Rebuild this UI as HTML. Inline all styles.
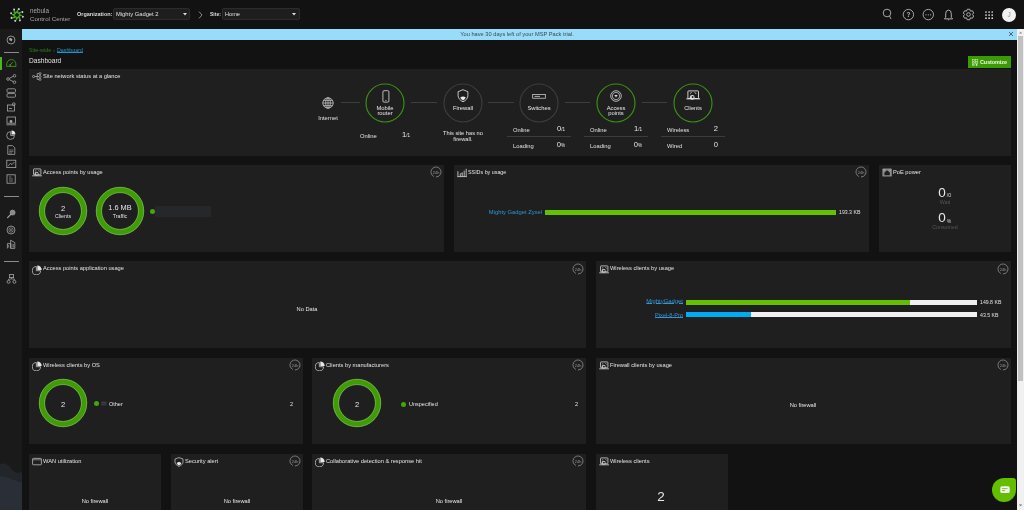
<!DOCTYPE html>
<html><head><meta charset="utf-8"><style>
html,body{margin:0;padding:0;width:1024px;height:510px;overflow:hidden;background:#121212;font-family:"Liberation Sans", sans-serif;}
.r{position:absolute;display:block;}
svg.r{will-change:transform;}
.tx{position:absolute;white-space:nowrap;will-change:transform;}
</style></head><body>
<div class="r" style="left:0.00px;top:0.00px;width:1024.00px;height:29.00px;background:#121212;"></div>
<svg class="r" style="left:8.65px;top:6.65px;width:16px;height:16px" viewBox="0 0 16 16"><circle cx="13.84" cy="9.76" r="1.05" fill="#c8c8c8"/><circle cx="10.89" cy="13.37" r="1.05" fill="#c8c8c8"/><circle cx="6.24" cy="13.84" r="1.05" fill="#c8c8c8"/><circle cx="2.63" cy="10.89" r="1.05" fill="#c8c8c8"/><circle cx="2.16" cy="6.24" r="1.05" fill="#c8c8c8"/><circle cx="5.11" cy="2.63" r="1.05" fill="#c8c8c8"/><circle cx="9.76" cy="2.16" r="1.05" fill="#c8c8c8"/><circle cx="13.37" cy="5.11" r="1.05" fill="#c8c8c8"/><path d="M7.42 6.40Q5.97 5.03 8.84 2.46Q9.78 5.10 8.82 6.51Z" fill="#45a818"/><path d="M8.72 6.46Q8.66 4.46 12.51 4.68Q11.31 7.21 9.63 7.52Z" fill="#45a818"/><path d="M9.60 7.42Q10.97 5.97 13.54 8.84Q10.90 9.78 9.49 8.82Z" fill="#45a818"/><path d="M9.54 8.72Q11.54 8.66 11.32 12.51Q8.79 11.31 8.48 9.63Z" fill="#45a818"/><path d="M8.58 9.60Q10.03 10.97 7.16 13.54Q6.22 10.90 7.18 9.49Z" fill="#45a818"/><path d="M7.28 9.54Q7.34 11.54 3.49 11.32Q4.69 8.79 6.37 8.48Z" fill="#45a818"/><path d="M6.40 8.58Q5.03 10.03 2.46 7.16Q5.10 6.22 6.51 7.18Z" fill="#45a818"/><path d="M6.46 7.28Q4.46 7.34 4.68 3.49Q7.21 4.69 7.52 6.37Z" fill="#45a818"/><circle cx="8.0" cy="8.0" r="1.6" fill="#101010"/></svg>
<div class="tx" style="left:30.00px;top:7.22px;font-size:6.3px;line-height:7.56px;color:#a6a6a6;font-weight:normal;">nebula</div>
<div class="tx" style="left:30.00px;top:15.08px;font-size:6.2px;line-height:7.44px;color:#a6a6a6;font-weight:normal;">Control Center</div>
<div class="tx" style="left:77.00px;top:10.90px;font-size:5.5px;line-height:6.60px;color:#dcdcdc;font-weight:bold;">Organization:</div>
<div class="r" style="left:113.00px;top:8.30px;width:77.00px;height:12.00px;background:#1e1e1e;border:0.6px solid #2c2c2c;box-sizing:border-box;border-radius:2px;"></div>
<div class="tx" style="left:115.80px;top:10.82px;font-size:5.8px;line-height:6.96px;color:#e0e0e0;font-weight:normal;">Mighty Gadget 2</div>
<svg class="r" style="left:182.50px;top:13.00px;width:4px;height:3px" viewBox="0 0 4 3"><path d="M0 0H4L2 2.5Z" fill="#ddd"/></svg>
<svg class="r" style="left:198.00px;top:10.50px;width:5px;height:8px" viewBox="0 0 5 8"><path d="M1 0.6L4 4L1 7.4" stroke="#aaa" stroke-width="0.8" fill="none"/></svg>
<div class="tx" style="left:210.00px;top:11.30px;font-size:5.0px;line-height:6.00px;color:#dcdcdc;font-weight:bold;">Site:</div>
<div class="r" style="left:222.20px;top:8.20px;width:77.40px;height:12.30px;background:#1e1e1e;border:0.6px solid #2c2c2c;box-sizing:border-box;border-radius:2px;"></div>
<div class="tx" style="left:224.60px;top:11.04px;font-size:5.6px;line-height:6.72px;color:#e0e0e0;font-weight:normal;">Home</div>
<svg class="r" style="left:291.70px;top:13.00px;width:4px;height:3px" viewBox="0 0 4 3"><path d="M0 0H4L2 2.5Z" fill="#ddd"/></svg>
<svg class="r" style="left:881.00px;top:7.00px;width:12px;height:14px" viewBox="0 0 12 14"><circle cx="6" cy="6" r="3.8" fill="none" stroke="#b5b5b5" stroke-width="0.9"/><path d="M8.5 9L10 12" stroke="#b5b5b5" stroke-width="0.9"/></svg>
<svg class="r" style="left:902.00px;top:8.00px;width:13px;height:13px" viewBox="0 0 13 13"><circle cx="6.4" cy="6.6" r="5.2" fill="none" stroke="#b5b5b5" stroke-width="0.9"/><text x="6.4" y="8.8" font-size="6.5" font-weight="bold" fill="#b5b5b5" text-anchor="middle" font-family="Liberation Sans">?</text></svg>
<svg class="r" style="left:922.00px;top:8.00px;width:13px;height:13px" viewBox="0 0 13 13"><circle cx="6.3" cy="6.6" r="5.2" fill="none" stroke="#b5b5b5" stroke-width="0.9"/><circle cx="4" cy="6.8" r="0.6" fill="#b5b5b5"/><circle cx="6.3" cy="6.8" r="0.6" fill="#b5b5b5"/><circle cx="8.6" cy="6.8" r="0.6" fill="#b5b5b5"/></svg>
<svg class="r" style="left:942.00px;top:7.50px;width:13px;height:14px" viewBox="0 0 13 14"><path d="M3.7 9.4V5.8Q3.7 2.1 6.5 2.1Q9.3 2.1 9.3 5.8V9.4L10.6 10.9H2.4Z" fill="none" stroke="#b5b5b5" stroke-width="0.95" stroke-linejoin="round"/><path d="M5.8 11.4Q6.5 12.6 7.2 11.4" fill="#b5b5b5" stroke="#b5b5b5" stroke-width="0.6"/></svg>
<svg class="r" style="left:962.00px;top:8.00px;width:13px;height:13px" viewBox="0 0 13 13"><polygon points="4.56,3.12 5.22,1.25 7.78,1.25 8.44,3.12 8.46,3.13 10.40,2.77 11.68,4.99 10.40,6.49 10.40,6.51 11.68,8.01 10.40,10.23 8.46,9.87 8.44,9.88 7.78,11.75 5.22,11.75 4.56,9.88 4.54,9.87 2.60,10.23 1.32,8.01 2.60,6.51 2.60,6.49 1.32,4.99 2.60,2.77 4.54,3.13" fill="none" stroke="#b5b5b5" stroke-width="0.95" stroke-linejoin="round"/><circle cx="6.5" cy="6.5" r="1.8" fill="none" stroke="#b5b5b5" stroke-width="0.95"/></svg>
<svg class="r" style="left:984.50px;top:10.90px;width:9px;height:9px" viewBox="0 0 9 9"><circle cx="1.00" cy="1.00" r="0.85" fill="#e0e0e0"/><circle cx="1.00" cy="4.10" r="0.85" fill="#e0e0e0"/><circle cx="1.00" cy="7.20" r="0.85" fill="#e0e0e0"/><circle cx="4.10" cy="1.00" r="0.85" fill="#e0e0e0"/><circle cx="4.10" cy="4.10" r="0.85" fill="#e0e0e0"/><circle cx="4.10" cy="7.20" r="0.85" fill="#e0e0e0"/><circle cx="7.20" cy="1.00" r="0.85" fill="#e0e0e0"/><circle cx="7.20" cy="4.10" r="0.85" fill="#e0e0e0"/><circle cx="7.20" cy="7.20" r="0.85" fill="#e0e0e0"/></svg>
<div class="r" style="left:1001.6px;top:7.8px;width:14px;height:14px;border-radius:50%;background:#f2f2f2;"></div>
<div class="tx" style="left:808.60px;width:400px;text-align:center;top:11.10px;font-size:6.5px;line-height:7.80px;color:#8496a6;font-weight:normal;">J</div>
<div class="r" style="left:0.00px;top:29.00px;width:22.00px;height:481.00px;background:#1a1a1a;"></div>
<svg class="r" style="left:6.10px;top:35.00px;width:10px;height:10px" viewBox="0 0 10 10"><circle cx="5" cy="5" r="4" fill="none" stroke="#a8a8a8" stroke-width="0.8"/><path d="M3 3L6.5 4L5.5 6.5Z" fill="#a8a8a8"/><circle cx="4.5" cy="4.5" r="1.2" fill="#a8a8a8"/></svg>
<div class="r" style="left:4.00px;top:52.10px;width:14.50px;height:1.40px;background:#8c8c8c;"></div>
<div class="r" style="left:0.00px;top:57.30px;width:2.00px;height:12.70px;background:#4ab81c;"></div>
<svg class="r" style="left:6.20px;top:59.40px;width:11px;height:8.4px" viewBox="0 0 11 8.4"><path d="M0.6 7.4Q0.4 0.6 5.3 0.6Q10.2 0.6 10 7.4Z" fill="none" stroke="#3e9a14" stroke-width="0.9" stroke-linejoin="round"/><path d="M3.6 6.6L6.8 3.2" stroke="#3e9a14" stroke-width="0.9"/><circle cx="4.2" cy="6" r="0.9" fill="#3e9a14"/></svg>
<svg class="r" style="left:6.00px;top:74.00px;width:11px;height:10px" viewBox="0 0 11 10"><circle cx="2" cy="5" r="1.3" fill="none" stroke="#a8a8a8" stroke-width="0.8"/><circle cx="8.5" cy="1.8" r="1.3" fill="none" stroke="#a8a8a8" stroke-width="0.8"/><circle cx="8.5" cy="8.2" r="1.3" fill="none" stroke="#a8a8a8" stroke-width="0.8"/><path d="M3.2 4.4L7.3 2.4M3.2 5.6L7.3 7.6" stroke="#a8a8a8" stroke-width="0.8"/></svg>
<svg class="r" style="left:6.00px;top:88.10px;width:11px;height:10px" viewBox="0 0 11 10"><rect x="1" y="0.8" width="8.5" height="3.6" rx="1" fill="none" stroke="#a8a8a8" stroke-width="0.8"/><rect x="1" y="5.6" width="8.5" height="3.6" rx="1" fill="none" stroke="#a8a8a8" stroke-width="0.8"/></svg>
<svg class="r" style="left:6.00px;top:102.20px;width:11px;height:10px" viewBox="0 0 11 10"><rect x="1.4" y="3" width="7" height="6" fill="none" stroke="#a8a8a8" stroke-width="0.8"/><circle cx="7.8" cy="2.2" r="1.4" fill="none" stroke="#a8a8a8" stroke-width="0.8"/><path d="M3 6.5H6" stroke="#a8a8a8" stroke-width="0.8"/></svg>
<svg class="r" style="left:6.00px;top:116.30px;width:11px;height:10px" viewBox="0 0 11 10"><rect x="1" y="1" width="8.5" height="6.2" fill="none" stroke="#a8a8a8" stroke-width="0.8"/><path d="M0.3 8.8H10.2" stroke="#a8a8a8" stroke-width="0.8"/><circle cx="5" cy="5.5" r="1.4" fill="#a8a8a8"/></svg>
<svg class="r" style="left:6.00px;top:130.40px;width:11px;height:10px" viewBox="0 0 11 10"><path d="M4.6 1.6A3.9 3.9 0 1 0 8.5 5.5H4.6Z" fill="none" stroke="#a8a8a8" stroke-width="0.8"/><path d="M5.5 0.6A3.9 3.9 0 0 1 9.4 4.5H5.5Z" fill="#e8e8e8"/></svg>
<svg class="r" style="left:6.00px;top:145.00px;width:11px;height:10px" viewBox="0 0 11 10"><path d="M1.8 0.6H6.5L8.8 2.9V9.4H1.8Z" fill="none" stroke="#a8a8a8" stroke-width="0.8"/><path d="M3.2 5H7.4M3.2 6.6H7.4M3.2 8H6" stroke="#a8a8a8" stroke-width="0.6"/></svg>
<svg class="r" style="left:6.00px;top:159.00px;width:11px;height:10px" viewBox="0 0 11 10"><rect x="0.8" y="1.2" width="9" height="7.4" fill="none" stroke="#a8a8a8" stroke-width="0.8"/><path d="M2.2 6.8L4.4 4.4L6 5.6L8.4 3" stroke="#a8a8a8" stroke-width="0.8" fill="none"/></svg>
<svg class="r" style="left:6.00px;top:173.70px;width:11px;height:10px" viewBox="0 0 11 10"><rect x="1" y="0.8" width="8.2" height="8.4" fill="none" stroke="#a8a8a8" stroke-width="0.8"/><path d="M3 3H5.5M3 5H7M3 7H7" stroke="#a8a8a8" stroke-width="0.6"/></svg>
<div class="r" style="left:4.00px;top:196.10px;width:14.50px;height:1.40px;background:#8c8c8c;"></div>
<svg class="r" style="left:6.00px;top:209.40px;width:11px;height:10px" viewBox="0 0 11 10"><circle cx="6.6" cy="3.6" r="2.5" fill="#8a8a8a" stroke="#a8a8a8" stroke-width="0.6"/><path d="M4.8 5.4L1.6 8.6" stroke="#a8a8a8" stroke-width="1.2" stroke-linecap="round"/></svg>
<svg class="r" style="left:6.00px;top:224.70px;width:11px;height:10px" viewBox="0 0 11 10"><circle cx="5" cy="5" r="4" fill="none" stroke="#a8a8a8" stroke-width="0.8"/><circle cx="5" cy="5" r="2.2" fill="none" stroke="#a8a8a8" stroke-width="0.6"/><path d="M3.6 3.6L6.4 6.4M6.4 3.6L3.6 6.4" stroke="#a8a8a8" stroke-width="0.5"/></svg>
<svg class="r" style="left:6.00px;top:238.80px;width:11px;height:10px" viewBox="0 0 11 10"><path d="M1.4 9.4V4.6H4.6V9.4M4.6 9.4V1.2L8.8 3.6V9.4Z" fill="none" stroke="#a8a8a8" stroke-width="0.8" stroke-linejoin="round"/><path d="M2.6 6V8.6M6 4.6V8.6M7.4 5V8.6" stroke="#a8a8a8" stroke-width="0.6"/></svg>
<div class="r" style="left:4.00px;top:261.00px;width:14.50px;height:1.40px;background:#8c8c8c;"></div>
<svg class="r" style="left:6.00px;top:274.00px;width:11px;height:10px" viewBox="0 0 11 10"><rect x="3.4" y="0.6" width="4.2" height="3" fill="none" stroke="#a8a8a8" stroke-width="0.8"/><circle cx="2.6" cy="7.8" r="1.5" fill="none" stroke="#a8a8a8" stroke-width="0.8"/><circle cx="8.4" cy="7.8" r="1.5" fill="none" stroke="#a8a8a8" stroke-width="0.8"/><path d="M5.5 3.6V5H2.6V6.3M5.5 5H8.4V6.3" stroke="#a8a8a8" stroke-width="0.7" fill="none"/></svg>
<svg class="r" style="left:0.00px;top:455.00px;width:22px;height:55px" viewBox="0 0 22 55"><path d="M0 9Q5 7 9 11Q13 17 18 18Q21 17 22 17V55H0Z" fill="#22252a"/><path d="M0 21Q8 22 14 25Q19 27 22 27V55H0Z" fill="#2a2e36"/></svg>
<div class="r" style="left:22.00px;top:29.00px;width:995.00px;height:11.00px;background:#98dcfa;"></div>
<div class="tx" style="left:316.50px;width:400px;text-align:center;top:30.58px;font-size:5.7px;line-height:6.84px;color:#3a4a52;font-weight:normal;">You have 30 days left of your MSP Pack trial.</div>
<svg class="r" style="left:1007.80px;top:30.80px;width:6px;height:6px" viewBox="0 0 6 6"><path d="M1 1L5 5M5 1L1 5" stroke="#34474f" stroke-width="0.8"/></svg>
<div class="r" style="left:1017.00px;top:29.00px;width:7.00px;height:481.00px;background:#f1f1f1;"></div>
<div class="r" style="left:1018.00px;top:36.00px;width:5.00px;height:345.00px;background:#c1c1c1;"></div>
<svg class="r" style="left:1017.00px;top:30.00px;width:7px;height:5px" viewBox="0 0 7 5"><path d="M2 3.4L3.6 1.8L5.2 3.4Z" fill="#8a8a8a"/></svg>
<svg class="r" style="left:1017.00px;top:503.00px;width:7px;height:5px" viewBox="0 0 7 5"><path d="M2 1.6L3.6 3.2L5.2 1.6Z" fill="#6a6a6a"/></svg>
<div class="tx" style="left:28.80px;top:46.66px;font-size:5.4px;line-height:6.48px;color:#2f7d19;font-weight:normal;">Site-wide <span style="font-size:4px">&gt;</span></div>
<div class="tx" style="left:57.00px;top:46.72px;font-size:5.3px;line-height:6.36px;color:#2a8fc8;font-weight:normal;text-decoration:underline;text-underline-offset:0.2px;text-decoration-thickness:0.6px;">Dashboard</div>
<div class="tx" style="left:29.00px;top:57.34px;font-size:6.6px;line-height:7.92px;color:#e0e0e0;font-weight:normal;">Dashboard</div>
<div class="r" style="left:967.70px;top:56.10px;width:43.30px;height:11.80px;background:#3b9b04;"></div>
<svg class="r" style="left:972.20px;top:58.60px;width:7px;height:7px" viewBox="0 0 7 7"><rect x="0.4" y="0.4" width="2.3" height="1.9" fill="none" stroke="#d6ecc8" stroke-width="0.55"/><rect x="3.5" y="0.4" width="2.3" height="1.9" fill="none" stroke="#d6ecc8" stroke-width="0.55"/><rect x="0.4" y="3.0" width="2.3" height="1.6" fill="none" stroke="#d6ecc8" stroke-width="0.55"/><rect x="3.5" y="3.0" width="2.3" height="1.6" fill="none" stroke="#d6ecc8" stroke-width="0.55"/><rect x="0.4" y="5.2" width="2.3" height="1.4" fill="none" stroke="#d6ecc8" stroke-width="0.55"/><circle cx="4.6" cy="5.9" r="0.9" fill="#e6f2de"/></svg>
<div class="tx" style="left:980.20px;top:58.70px;font-size:5.5px;line-height:6.60px;color:#eef7e8;font-weight:bold;letter-spacing:-0.1px;">Customize</div>
<div class="r" style="left:29.00px;top:69.00px;width:981.98px;height:86.50px;background:#1f1f1f;"></div>
<svg class="r" style="left:32.20px;top:72.20px;width:10px;height:10px" viewBox="0 0 10 10"><circle cx="1.6" cy="4.5" r="1.1" fill="none" stroke="#bdbdbd" stroke-width="0.7"/><path d="M2.7 4.5H5.2M5.2 1.6V7.4M5.2 1.6H7M5.2 4.5H7M5.2 7.4H7" stroke="#bdbdbd" stroke-width="0.7" fill="none"/><circle cx="8" cy="1.6" r="1" fill="none" stroke="#bdbdbd" stroke-width="0.7"/><circle cx="8" cy="4.5" r="1" fill="none" stroke="#bdbdbd" stroke-width="0.7"/><circle cx="8" cy="7.4" r="1" fill="none" stroke="#bdbdbd" stroke-width="0.7"/></svg>
<div class="tx" style="left:43.00px;top:73.08px;font-size:5.7px;line-height:6.84px;color:#e3e3e3;font-weight:normal;">Site network status at a glance</div>
<svg class="r" style="left:321.80px;top:96.70px;width:12px;height:12px" viewBox="0 0 12 12"><circle cx="6" cy="6" r="5.2" fill="none" stroke="#d0d0d0" stroke-width="0.8"/><ellipse cx="6" cy="6" rx="2.3" ry="5.2" fill="none" stroke="#d0d0d0" stroke-width="0.7"/><path d="M0.8 6H11.2M1.6 3.4H10.4M1.6 8.6H10.4M6 0.8V11.2" stroke="#d0d0d0" stroke-width="0.7"/></svg>
<div class="tx" style="left:127.80px;width:400px;text-align:center;top:115.02px;font-size:5.8px;line-height:6.96px;color:#e0e0e0;font-weight:normal;">Internet</div>
<div class="r" style="left:341.00px;top:102.00px;width:19.00px;height:1.10px;background:#3d3d3d;"></div>
<div class="r" style="left:411.00px;top:102.00px;width:26.00px;height:1.10px;background:#3d3d3d;"></div>
<div class="r" style="left:488.00px;top:102.00px;width:26.00px;height:1.10px;background:#3d3d3d;"></div>
<div class="r" style="left:565.00px;top:102.00px;width:25.00px;height:1.10px;background:#3d3d3d;"></div>
<div class="r" style="left:642.00px;top:102.00px;width:25.00px;height:1.10px;background:#3d3d3d;"></div>
<svg class="r" style="left:365.40px;top:82.50px;width:40px;height:40px" viewBox="0 0 40 40"><circle cx="20" cy="20" r="19.0" fill="none" stroke="#3a9110" stroke-width="1.15"/></svg>
<div class="tx" style="left:185.40px;width:400px;text-align:center;top:105.02px;font-size:5.8px;line-height:6.96px;color:#e6e6e6;font-weight:normal;">Mobile</div>
<div class="tx" style="left:185.40px;width:400px;text-align:center;top:109.92px;font-size:5.8px;line-height:6.96px;color:#e6e6e6;font-weight:normal;">router</div>
<svg class="r" style="left:442.50px;top:82.50px;width:40px;height:40px" viewBox="0 0 40 40"><circle cx="20" cy="20" r="19.0" fill="none" stroke="#3a3d42" stroke-width="1.15"/></svg>
<div class="tx" style="left:262.50px;width:400px;text-align:center;top:104.82px;font-size:5.8px;line-height:6.96px;color:#e6e6e6;font-weight:normal;">Firewall</div>
<svg class="r" style="left:519.20px;top:82.50px;width:40px;height:40px" viewBox="0 0 40 40"><circle cx="20" cy="20" r="19.0" fill="none" stroke="#3a3d42" stroke-width="1.15"/></svg>
<div class="tx" style="left:339.20px;width:400px;text-align:center;top:104.82px;font-size:5.8px;line-height:6.96px;color:#e6e6e6;font-weight:normal;">Switches</div>
<svg class="r" style="left:596.20px;top:82.50px;width:40px;height:40px" viewBox="0 0 40 40"><circle cx="20" cy="20" r="19.0" fill="none" stroke="#3a9110" stroke-width="1.15"/></svg>
<div class="tx" style="left:416.20px;width:400px;text-align:center;top:105.02px;font-size:5.8px;line-height:6.96px;color:#e6e6e6;font-weight:normal;">Access</div>
<div class="tx" style="left:416.20px;width:400px;text-align:center;top:109.92px;font-size:5.8px;line-height:6.96px;color:#e6e6e6;font-weight:normal;">points</div>
<svg class="r" style="left:672.80px;top:82.50px;width:40px;height:40px" viewBox="0 0 40 40"><circle cx="20" cy="20" r="19.0" fill="none" stroke="#3a9110" stroke-width="1.15"/></svg>
<div class="tx" style="left:492.80px;width:400px;text-align:center;top:104.82px;font-size:5.8px;line-height:6.96px;color:#e6e6e6;font-weight:normal;">Clients</div>
<svg class="r" style="left:381.60px;top:90.00px;width:8px;height:13px" viewBox="0 0 8 13"><rect x="0.9" y="0.7" width="6" height="11.4" rx="1.1" fill="none" stroke="#e0e0e0" stroke-width="0.8"/><path d="M3 10.4H4.8" stroke="#d0d0d0" stroke-width="0.5"/></svg>
<svg class="r" style="left:456.50px;top:89.20px;width:12px;height:14px" viewBox="0 0 12 14"><path d="M6 0.7L10.9 2.7V6.6C10.9 9.4 8.6 11.6 6 12.8C3.4 11.6 1.1 9.4 1.1 6.6V2.7Z" fill="none" stroke="#e0e0e0" stroke-width="0.85" stroke-linejoin="round"/><path d="M3.2 8.6Q6 6.4 8.8 8.6Q7.6 10.6 6 11.4Q4.4 10.6 3.2 8.6Z" fill="#eeeeee"/></svg>
<svg class="r" style="left:532.00px;top:93.60px;width:14px;height:5px" viewBox="0 0 14 5"><rect x="0.7" y="0.6" width="12.6" height="3.6" fill="none" stroke="#e0e0e0" stroke-width="0.7"/><path d="M2.5 2.4H8" stroke="#bbb" stroke-width="0.9"/></svg>
<svg class="r" style="left:610.00px;top:90.00px;width:12px;height:12px" viewBox="0 0 12 12"><circle cx="6" cy="6" r="5.3" fill="none" stroke="#d8d8d8" stroke-width="0.8"/><circle cx="6" cy="6" r="3.7" fill="none" stroke="#d8d8d8" stroke-width="0.7"/><path d="M4.4 5H7.6L6 7.6Z" fill="#e0e0e0"/></svg>
<svg class="r" style="left:685.80px;top:90.20px;width:14px;height:11px" viewBox="0 0 14 11"><rect x="1.9" y="0.9" width="10.6" height="7.6" rx="0.6" fill="none" stroke="#e0e0e0" stroke-width="0.9"/><path d="M0.4 8.8H14" stroke="#e0e0e0" stroke-width="1.1"/><circle cx="6.2" cy="7.4" r="2.4" fill="#e0e0e0"/><circle cx="6.6" cy="7.0" r="1.0" fill="#1f1f1f"/><path d="M4 3.6L5.6 2.4M8.6 2.2L10.2 4" stroke="#e0e0e0" stroke-width="0.8"/></svg>
<div class="tx" style="left:360.40px;top:132.92px;font-size:5.8px;line-height:6.96px;color:#e0e0e0;font-weight:normal;">Online</div>
<div class="tx" style="left:10.40px;width:400px;text-align:right;top:130.44px;font-size:7.6px;line-height:9.12px;color:#e6e6e6;font-weight:normal;">1<span style="font-size:4.6px">/1</span></div>
<div class="tx" style="left:262.50px;width:400px;text-align:center;top:130.38px;font-size:5.7px;line-height:6.84px;color:#e6e6e6;font-weight:normal;">This site has no</div>
<div class="tx" style="left:262.50px;width:400px;text-align:center;top:135.58px;font-size:5.7px;line-height:6.84px;color:#e6e6e6;font-weight:normal;">firewall.</div>
<div class="tx" style="left:513.40px;top:126.92px;font-size:5.8px;line-height:6.96px;color:#e0e0e0;font-weight:normal;">Online</div>
<div class="tx" style="left:164.80px;width:400px;text-align:right;top:124.34px;font-size:7.6px;line-height:9.12px;color:#e6e6e6;font-weight:normal;">0<span style="font-size:4.6px">/1</span></div>
<div class="r" style="left:507.20px;top:135.60px;width:64.00px;height:1.00px;background:#3c3c3c;"></div>
<div class="tx" style="left:513.40px;top:142.52px;font-size:5.8px;line-height:6.96px;color:#e0e0e0;font-weight:normal;">Loading</div>
<div class="tx" style="left:164.80px;width:400px;text-align:right;top:140.14px;font-size:7.6px;line-height:9.12px;color:#e6e6e6;font-weight:normal;">0<span style="font-size:4.6px">%</span></div>
<div class="tx" style="left:590.40px;top:126.92px;font-size:5.8px;line-height:6.96px;color:#e0e0e0;font-weight:normal;">Online</div>
<div class="tx" style="left:241.80px;width:400px;text-align:right;top:124.34px;font-size:7.6px;line-height:9.12px;color:#e6e6e6;font-weight:normal;">1<span style="font-size:4.6px">/1</span></div>
<div class="r" style="left:584.20px;top:135.60px;width:64.00px;height:1.00px;background:#3c3c3c;"></div>
<div class="tx" style="left:590.40px;top:142.52px;font-size:5.8px;line-height:6.96px;color:#e0e0e0;font-weight:normal;">Loading</div>
<div class="tx" style="left:241.80px;width:400px;text-align:right;top:140.14px;font-size:7.6px;line-height:9.12px;color:#e6e6e6;font-weight:normal;">0<span style="font-size:4.6px">%</span></div>
<div class="tx" style="left:667.00px;top:126.92px;font-size:5.8px;line-height:6.96px;color:#e0e0e0;font-weight:normal;">Wireless</div>
<div class="tx" style="left:318.40px;width:400px;text-align:right;top:124.34px;font-size:7.6px;line-height:9.12px;color:#e6e6e6;font-weight:normal;">2</div>
<div class="r" style="left:660.80px;top:135.60px;width:64.00px;height:1.00px;background:#3c3c3c;"></div>
<div class="tx" style="left:667.00px;top:142.52px;font-size:5.8px;line-height:6.96px;color:#e0e0e0;font-weight:normal;">Wired</div>
<div class="tx" style="left:318.40px;width:400px;text-align:right;top:140.14px;font-size:7.6px;line-height:9.12px;color:#e6e6e6;font-weight:normal;">0</div>
<div class="r" style="left:29.00px;top:165.20px;width:415.42px;height:86.50px;background:#1f1f1f;"></div>
<svg class="r" style="left:32.20px;top:168.40px;width:10px;height:10px" viewBox="0 0 10 10"><rect x="1.5" y="0.9" width="7.4" height="5.8" rx="0.5" fill="none" stroke="#bdbdbd" stroke-width="0.9"/><path d="M0.3 7.8H9.9" stroke="#bdbdbd" stroke-width="1.0"/><circle cx="4.6" cy="5.9" r="2.1" fill="#bdbdbd"/><circle cx="4.9" cy="5.6" r="0.9" fill="#1f1f1f"/><path d="M3 3.2L4.2 2.4M6.4 2.2L7.6 3.6" stroke="#bdbdbd" stroke-width="0.7"/></svg>
<div class="tx" style="left:43.00px;top:169.28px;font-size:5.7px;line-height:6.84px;color:#e3e3e3;font-weight:normal;">Access points by usage</div>
<svg class="r" style="left:430.22px;top:166.40px;width:12px;height:12px" viewBox="0 0 12 12"><circle cx="6" cy="6" r="5.0" fill="none" stroke="#858585" stroke-width="0.8" stroke-dasharray="28.5 3" transform="rotate(115 6 6)"/><text x="6.1" y="7.6" font-size="3.9" fill="#9a9a9a" text-anchor="middle" font-family="Liberation Sans">24h</text></svg>
<svg class="r" style="left:37.30px;top:184.60px;width:52px;height:52px" viewBox="0 0 52 52"><circle cx="26" cy="26" r="21.1" fill="none" stroke="#3f9c04" stroke-width="5.800000000000001"/><circle cx="26" cy="26" r="23.8" fill="none" stroke="#9fd08a" stroke-width="0.6" opacity="0.85"/><circle cx="26" cy="26" r="18.4" fill="none" stroke="#9fd08a" stroke-width="0.6" opacity="0.85"/></svg>
<svg class="r" style="left:93.80px;top:184.60px;width:52px;height:52px" viewBox="0 0 52 52"><circle cx="26" cy="26" r="21.1" fill="none" stroke="#3f9c04" stroke-width="5.800000000000001"/><circle cx="26" cy="26" r="23.8" fill="none" stroke="#9fd08a" stroke-width="0.6" opacity="0.85"/><circle cx="26" cy="26" r="18.4" fill="none" stroke="#9fd08a" stroke-width="0.6" opacity="0.85"/></svg>
<div class="tx" style="left:-136.70px;width:400px;text-align:center;top:204.34px;font-size:7.6px;line-height:9.12px;color:#e6e6e6;font-weight:normal;">2</div>
<div class="tx" style="left:-136.70px;width:400px;text-align:center;top:213.32px;font-size:5.3px;line-height:6.36px;color:#e0e0e0;font-weight:normal;">Clients</div>
<div class="tx" style="left:-80.20px;width:400px;text-align:center;top:204.46px;font-size:7.4px;line-height:8.88px;color:#e6e6e6;font-weight:normal;">1.6 MB</div>
<div class="tx" style="left:-80.20px;width:400px;text-align:center;top:213.32px;font-size:5.3px;line-height:6.36px;color:#e0e0e0;font-weight:normal;">Traffic</div>
<div class="r" style="left:150.2px;top:209.3px;width:5px;height:5px;border-radius:50%;background:#40a80c;"></div>
<div class="r" style="left:155.20px;top:205.50px;width:56.00px;height:11.40px;background:#25272b;"></div>
<div class="r" style="left:453.92px;top:165.20px;width:415.42px;height:86.50px;background:#1f1f1f;"></div>
<svg class="r" style="left:457.12px;top:168.40px;width:10px;height:10px" viewBox="0 0 10 10"><path d="M0.9 9V3.2M9.2 9V0.8M3.3 9V5.6M5.2 9V4.4M7.2 9V2.6M0.5 8.6H9.6" stroke="#bdbdbd" stroke-width="0.95" fill="none"/><path d="M3.3 5.6H5.2" stroke="#bdbdbd" stroke-width="0.6"/></svg>
<div class="tx" style="left:467.92px;top:169.49px;font-size:5.35px;line-height:6.42px;color:#e3e3e3;font-weight:normal;">SSIDs by usage</div>
<svg class="r" style="left:855.14px;top:166.40px;width:12px;height:12px" viewBox="0 0 12 12"><circle cx="6" cy="6" r="5.0" fill="none" stroke="#858585" stroke-width="0.8" stroke-dasharray="28.5 3" transform="rotate(115 6 6)"/><text x="6.1" y="7.6" font-size="3.9" fill="#9a9a9a" text-anchor="middle" font-family="Liberation Sans">24h</text></svg>
<div class="tx" style="left:142.00px;width:400px;text-align:right;top:208.72px;font-size:5.8px;line-height:6.96px;color:#2e97d4;font-weight:normal;">Mighty Gadget Zyxel</div>
<div class="r" style="left:545.00px;top:209.80px;width:291.00px;height:5.00px;background:#62c000;"></div>
<div class="tx" style="left:838.60px;top:209.08px;font-size:5.2px;line-height:6.24px;color:#e0e0e0;font-weight:normal;">193.3 KB</div>
<div class="r" style="left:878.84px;top:165.20px;width:132.14px;height:86.50px;background:#1f1f1f;"></div>
<svg class="r" style="left:882.04px;top:168.40px;width:10px;height:10px" viewBox="0 0 10 10"><rect x="0.4" y="0.4" width="9.4" height="8.2" rx="0.9" fill="#8c8c8c"/><path d="M2.4 7.2V4.6L5.1 2.2L7.8 4.6V7.2Z" fill="#1f1f1f"/><path d="M1.4 2.2L2.6 1.4M7.6 1.4L8.8 2.4" stroke="#cfcfcf" stroke-width="0.6"/></svg>
<div class="tx" style="left:892.84px;top:169.28px;font-size:5.7px;line-height:6.84px;color:#e3e3e3;font-weight:normal;">PoE power</div>
<div class="tx" style="left:741.70px;width:400px;text-align:center;top:184.50px;font-size:13.5px;line-height:16.20px;color:#e8e8e8;font-weight:normal;">0</div>
<div class="tx" style="left:749.20px;width:400px;text-align:center;top:192.20px;font-size:5.5px;line-height:6.60px;color:#d0d0d0;font-weight:normal;">/0</div>
<div class="tx" style="left:744.60px;width:400px;text-align:center;top:198.82px;font-size:5.3px;line-height:6.36px;color:#555555;font-weight:normal;">Watt</div>
<div class="tx" style="left:741.70px;width:400px;text-align:center;top:209.90px;font-size:13.5px;line-height:16.20px;color:#e8e8e8;font-weight:normal;">0</div>
<div class="tx" style="left:749.00px;width:400px;text-align:center;top:217.50px;font-size:5px;line-height:6.00px;color:#d0d0d0;font-weight:normal;">%</div>
<div class="tx" style="left:744.60px;width:400px;text-align:center;top:224.12px;font-size:5.3px;line-height:6.36px;color:#555555;font-weight:normal;">Consumed</div>
<div class="r" style="left:29.00px;top:261.40px;width:557.06px;height:86.50px;background:#1f1f1f;"></div>
<svg class="r" style="left:32.20px;top:264.60px;width:10px;height:10px" viewBox="0 0 10 10"><path d="M4.4 1.6A4.1 4.1 0 1 0 8.5 5.7H4.4Z" fill="none" stroke="#bdbdbd" stroke-width="0.85"/><path d="M5.3 0.5A4.4 4.4 0 0 1 9.7 4.9H5.3Z" fill="#e8e8e8"/></svg>
<div class="tx" style="left:43.00px;top:265.48px;font-size:5.7px;line-height:6.84px;color:#e3e3e3;font-weight:normal;">Access points application usage</div>
<svg class="r" style="left:571.86px;top:262.60px;width:12px;height:12px" viewBox="0 0 12 12"><circle cx="6" cy="6" r="5.0" fill="none" stroke="#858585" stroke-width="0.8" stroke-dasharray="28.5 3" transform="rotate(115 6 6)"/><text x="6.1" y="7.6" font-size="3.9" fill="#9a9a9a" text-anchor="middle" font-family="Liberation Sans">24h</text></svg>
<div class="tx" style="left:107.40px;width:400px;text-align:center;top:306.08px;font-size:5.7px;line-height:6.84px;color:#e6e6e6;font-weight:normal;">No Data</div>
<div class="r" style="left:595.56px;top:261.40px;width:415.42px;height:86.50px;background:#1f1f1f;"></div>
<svg class="r" style="left:598.76px;top:264.60px;width:10px;height:10px" viewBox="0 0 10 10"><rect x="1.5" y="0.9" width="7.4" height="5.8" rx="0.5" fill="none" stroke="#bdbdbd" stroke-width="0.9"/><path d="M0.3 7.8H9.9" stroke="#bdbdbd" stroke-width="1.0"/><circle cx="4.6" cy="5.9" r="2.1" fill="#bdbdbd"/><circle cx="4.9" cy="5.6" r="0.9" fill="#1f1f1f"/><path d="M3 3.2L4.2 2.4M6.4 2.2L7.6 3.6" stroke="#bdbdbd" stroke-width="0.7"/></svg>
<div class="tx" style="left:609.56px;top:265.48px;font-size:5.7px;line-height:6.84px;color:#e3e3e3;font-weight:normal;">Wireless clients by usage</div>
<svg class="r" style="left:996.78px;top:262.60px;width:12px;height:12px" viewBox="0 0 12 12"><circle cx="6" cy="6" r="5.0" fill="none" stroke="#858585" stroke-width="0.8" stroke-dasharray="28.5 3" transform="rotate(115 6 6)"/><text x="6.1" y="7.6" font-size="3.9" fill="#9a9a9a" text-anchor="middle" font-family="Liberation Sans">24h</text></svg>
<div class="tx" style="left:283.20px;width:400px;text-align:right;top:298.46px;font-size:5.9px;line-height:7.08px;color:#2e97d4;font-weight:normal;text-decoration:underline;text-underline-offset:0.3px;text-decoration-thickness:0.6px;">MightyGadget</div>
<div class="tx" style="left:283.20px;width:400px;text-align:right;top:311.61px;font-size:5.65px;line-height:6.78px;color:#2e97d4;font-weight:normal;text-decoration:underline;text-underline-offset:0.3px;text-decoration-thickness:0.6px;">Pixel-8-Pro</div>
<div class="r" style="left:686.30px;top:299.50px;width:291.00px;height:5.10px;background:#f0f0f0;"></div>
<div class="r" style="left:686.30px;top:299.50px;width:223.90px;height:5.10px;background:#62c000;"></div>
<div class="r" style="left:686.30px;top:312.30px;width:291.00px;height:5.00px;background:#f0f0f0;"></div>
<div class="r" style="left:686.30px;top:312.30px;width:64.50px;height:5.00px;background:#00aaf5;"></div>
<div class="tx" style="left:980.20px;top:298.88px;font-size:5.2px;line-height:6.24px;color:#e0e0e0;font-weight:normal;">149.8 KB</div>
<div class="tx" style="left:980.20px;top:311.88px;font-size:5.2px;line-height:6.24px;color:#e0e0e0;font-weight:normal;">43.5 KB</div>
<div class="r" style="left:29.00px;top:357.60px;width:273.78px;height:86.50px;background:#1f1f1f;"></div>
<svg class="r" style="left:32.20px;top:360.80px;width:10px;height:10px" viewBox="0 0 10 10"><path d="M4.4 1.6A4.1 4.1 0 1 0 8.5 5.7H4.4Z" fill="none" stroke="#bdbdbd" stroke-width="0.85"/><path d="M5.3 0.5A4.4 4.4 0 0 1 9.7 4.9H5.3Z" fill="#e8e8e8"/></svg>
<div class="tx" style="left:43.00px;top:361.68px;font-size:5.7px;line-height:6.84px;color:#e3e3e3;font-weight:normal;">Wireless clients by OS</div>
<svg class="r" style="left:288.58px;top:358.80px;width:12px;height:12px" viewBox="0 0 12 12"><circle cx="6" cy="6" r="5.0" fill="none" stroke="#858585" stroke-width="0.8" stroke-dasharray="28.5 3" transform="rotate(115 6 6)"/><text x="6.1" y="7.6" font-size="3.9" fill="#9a9a9a" text-anchor="middle" font-family="Liberation Sans">24h</text></svg>
<svg class="r" style="left:37.30px;top:377.00px;width:52px;height:52px" viewBox="0 0 52 52"><circle cx="26" cy="26" r="21.1" fill="none" stroke="#3f9c04" stroke-width="5.800000000000001"/><circle cx="26" cy="26" r="23.8" fill="none" stroke="#9fd08a" stroke-width="0.6" opacity="0.85"/><circle cx="26" cy="26" r="18.4" fill="none" stroke="#9fd08a" stroke-width="0.6" opacity="0.85"/></svg>
<div class="tx" style="left:-136.70px;width:400px;text-align:center;top:399.74px;font-size:7.6px;line-height:9.12px;color:#e6e6e6;font-weight:normal;">2</div>
<div class="r" style="left:94px;top:400.9px;width:5px;height:5px;border-radius:50%;background:#40a80c;"></div>
<svg class="r" style="left:101.20px;top:400.80px;width:6px;height:5px" viewBox="0 0 6 5"><rect x="0.2" y="0.4" width="5.4" height="4.2" fill="#2e3034"/><path d="M0.6 1.6H5.2M0.6 3.2H5.2" stroke="#44474c" stroke-width="0.7"/></svg>
<div class="tx" style="left:108.80px;top:400.80px;font-size:5.5px;line-height:6.60px;color:#e6e6e6;font-weight:normal;">Other</div>
<div class="tx" style="left:-106.80px;width:400px;text-align:right;top:401.00px;font-size:5.5px;line-height:6.60px;color:#e6e6e6;font-weight:normal;">2</div>
<div class="r" style="left:312.28px;top:357.60px;width:273.78px;height:86.50px;background:#1f1f1f;"></div>
<svg class="r" style="left:315.48px;top:360.80px;width:10px;height:10px" viewBox="0 0 10 10"><path d="M4.4 1.6A4.1 4.1 0 1 0 8.5 5.7H4.4Z" fill="none" stroke="#bdbdbd" stroke-width="0.85"/><path d="M5.3 0.5A4.4 4.4 0 0 1 9.7 4.9H5.3Z" fill="#e8e8e8"/></svg>
<div class="tx" style="left:326.28px;top:361.68px;font-size:5.7px;line-height:6.84px;color:#e3e3e3;font-weight:normal;">Clients by manufacturers</div>
<svg class="r" style="left:571.86px;top:358.80px;width:12px;height:12px" viewBox="0 0 12 12"><circle cx="6" cy="6" r="5.0" fill="none" stroke="#858585" stroke-width="0.8" stroke-dasharray="28.5 3" transform="rotate(115 6 6)"/><text x="6.1" y="7.6" font-size="3.9" fill="#9a9a9a" text-anchor="middle" font-family="Liberation Sans">24h</text></svg>
<svg class="r" style="left:331.20px;top:377.00px;width:52px;height:52px" viewBox="0 0 52 52"><circle cx="26" cy="26" r="21.1" fill="none" stroke="#3f9c04" stroke-width="5.800000000000001"/><circle cx="26" cy="26" r="23.8" fill="none" stroke="#9fd08a" stroke-width="0.6" opacity="0.85"/><circle cx="26" cy="26" r="18.4" fill="none" stroke="#9fd08a" stroke-width="0.6" opacity="0.85"/></svg>
<div class="tx" style="left:157.20px;width:400px;text-align:center;top:399.74px;font-size:7.6px;line-height:9.12px;color:#e6e6e6;font-weight:normal;">2</div>
<div class="r" style="left:401.3px;top:401.7px;width:5px;height:5px;border-radius:50%;background:#40a80c;"></div>
<div class="tx" style="left:409.30px;top:400.90px;font-size:5.5px;line-height:6.60px;color:#e6e6e6;font-weight:normal;">Unspecified</div>
<div class="tx" style="left:178.20px;width:400px;text-align:right;top:401.00px;font-size:5.5px;line-height:6.60px;color:#e6e6e6;font-weight:normal;">2</div>
<div class="r" style="left:595.56px;top:357.60px;width:415.42px;height:86.50px;background:#1f1f1f;"></div>
<svg class="r" style="left:598.76px;top:360.80px;width:10px;height:10px" viewBox="0 0 10 10"><rect x="1.5" y="0.9" width="7.4" height="5.8" rx="0.5" fill="none" stroke="#bdbdbd" stroke-width="0.9"/><path d="M0.3 7.8H9.9" stroke="#bdbdbd" stroke-width="1.0"/><circle cx="4.6" cy="5.9" r="2.1" fill="#bdbdbd"/><circle cx="4.9" cy="5.6" r="0.9" fill="#1f1f1f"/><path d="M3 3.2L4.2 2.4M6.4 2.2L7.6 3.6" stroke="#bdbdbd" stroke-width="0.7"/></svg>
<div class="tx" style="left:609.56px;top:361.68px;font-size:5.7px;line-height:6.84px;color:#e3e3e3;font-weight:normal;">Firewall clients by usage</div>
<svg class="r" style="left:996.78px;top:358.80px;width:12px;height:12px" viewBox="0 0 12 12"><circle cx="6" cy="6" r="5.0" fill="none" stroke="#858585" stroke-width="0.8" stroke-dasharray="28.5 3" transform="rotate(115 6 6)"/><text x="6.1" y="7.6" font-size="3.9" fill="#9a9a9a" text-anchor="middle" font-family="Liberation Sans">24h</text></svg>
<div class="tx" style="left:603.30px;width:400px;text-align:center;top:401.98px;font-size:5.7px;line-height:6.84px;color:#e6e6e6;font-weight:normal;">No firewall</div>
<div class="r" style="left:29.00px;top:453.80px;width:132.14px;height:86.50px;background:#1f1f1f;"></div>
<svg class="r" style="left:32.20px;top:457.00px;width:10px;height:10px" viewBox="0 0 10 10"><rect x="0.6" y="1.4" width="8.8" height="6.4" rx="0.6" fill="none" stroke="#bdbdbd" stroke-width="0.8"/><path d="M0.6 2.8H9.4" stroke="#bdbdbd" stroke-width="0.6"/></svg>
<div class="tx" style="left:43.00px;top:457.88px;font-size:5.7px;line-height:6.84px;color:#e3e3e3;font-weight:normal;">WAN utilization</div>
<div class="tx" style="left:-105.00px;width:400px;text-align:center;top:497.98px;font-size:5.7px;line-height:6.84px;color:#e6e6e6;font-weight:normal;">No firewall</div>
<div class="r" style="left:170.64px;top:453.80px;width:132.14px;height:86.50px;background:#1f1f1f;"></div>
<svg class="r" style="left:173.84px;top:457.00px;width:10px;height:10px" viewBox="0 0 10 10"><path d="M5 0.6L9 2V5C9 7 7 8.6 5 9.4C3 8.6 1 7 1 5V2Z" fill="none" stroke="#bdbdbd" stroke-width="0.8"/><path d="M2.6 6.2Q5 4 7.4 6.2Q6.5 8 5 8.6Q3.5 8 2.6 6.2Z" fill="#e8e8e8"/></svg>
<div class="tx" style="left:184.64px;top:457.88px;font-size:5.7px;line-height:6.84px;color:#e3e3e3;font-weight:normal;">Security alert</div>
<svg class="r" style="left:288.58px;top:455.00px;width:12px;height:12px" viewBox="0 0 12 12"><circle cx="6" cy="6" r="5.0" fill="none" stroke="#858585" stroke-width="0.8" stroke-dasharray="28.5 3" transform="rotate(115 6 6)"/><text x="6.1" y="7.6" font-size="3.9" fill="#9a9a9a" text-anchor="middle" font-family="Liberation Sans">24h</text></svg>
<div class="tx" style="left:36.70px;width:400px;text-align:center;top:497.98px;font-size:5.7px;line-height:6.84px;color:#e6e6e6;font-weight:normal;">No firewall</div>
<div class="r" style="left:312.28px;top:453.80px;width:273.78px;height:86.50px;background:#1f1f1f;"></div>
<svg class="r" style="left:315.48px;top:457.00px;width:10px;height:10px" viewBox="0 0 10 10"><path d="M4.4 1.6A4.1 4.1 0 1 0 8.5 5.7H4.4Z" fill="none" stroke="#bdbdbd" stroke-width="0.85"/><path d="M5.3 0.5A4.4 4.4 0 0 1 9.7 4.9H5.3Z" fill="#e8e8e8"/></svg>
<div class="tx" style="left:326.28px;top:457.88px;font-size:5.7px;line-height:6.84px;color:#e3e3e3;font-weight:normal;">Collaborative detection &amp; response hit</div>
<svg class="r" style="left:571.86px;top:455.00px;width:12px;height:12px" viewBox="0 0 12 12"><circle cx="6" cy="6" r="5.0" fill="none" stroke="#858585" stroke-width="0.8" stroke-dasharray="28.5 3" transform="rotate(115 6 6)"/><text x="6.1" y="7.6" font-size="3.9" fill="#9a9a9a" text-anchor="middle" font-family="Liberation Sans">24h</text></svg>
<div class="tx" style="left:249.20px;width:400px;text-align:center;top:497.98px;font-size:5.7px;line-height:6.84px;color:#e6e6e6;font-weight:normal;">No firewall</div>
<div class="r" style="left:595.56px;top:453.80px;width:132.14px;height:86.50px;background:#1f1f1f;"></div>
<svg class="r" style="left:598.76px;top:457.00px;width:10px;height:10px" viewBox="0 0 10 10"><rect x="1.5" y="0.9" width="7.4" height="5.8" rx="0.5" fill="none" stroke="#bdbdbd" stroke-width="0.9"/><path d="M0.3 7.8H9.9" stroke="#bdbdbd" stroke-width="1.0"/><circle cx="4.6" cy="5.9" r="2.1" fill="#bdbdbd"/><circle cx="4.9" cy="5.6" r="0.9" fill="#1f1f1f"/><path d="M3 3.2L4.2 2.4M6.4 2.2L7.6 3.6" stroke="#bdbdbd" stroke-width="0.7"/></svg>
<div class="tx" style="left:609.56px;top:457.88px;font-size:5.7px;line-height:6.84px;color:#e3e3e3;font-weight:normal;">Wireless clients</div>
<div class="tx" style="left:461.30px;width:400px;text-align:center;top:489.10px;font-size:13.5px;line-height:16.20px;color:#e8e8e8;font-weight:normal;">2</div>
<div class="r" style="left:991.8px;top:477.5px;width:24.4px;height:24.3px;border-radius:50% 3px 50% 50%;background:#64be00;"></div>
<svg class="r" style="left:999.50px;top:486.20px;width:10px;height:7.4px" viewBox="0 0 10 7.4"><rect x="0.3" y="0.3" width="9.4" height="6.8" rx="1.6" fill="#f4f4f4"/><path d="M2 2.6H7.6M2 4.6H5.2" stroke="#64be00" stroke-width="0.8"/></svg>
</body></html>
